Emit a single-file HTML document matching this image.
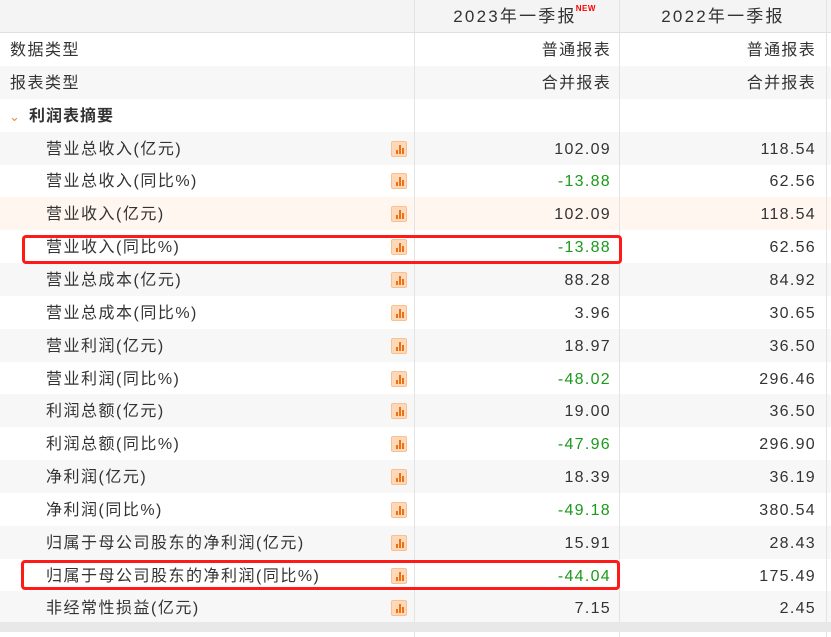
<!DOCTYPE html>
<html><head><meta charset="utf-8"><style>
*{margin:0;padding:0;box-sizing:border-box}
body{width:831px;height:637px;overflow:hidden;background:#fff;font-family:"Liberation Sans","Noto Sans CJK SC",sans-serif;font-size:16px;color:#333;position:relative;letter-spacing:0.6px}
.row{position:absolute;left:0;width:831px;height:33px;line-height:36px}
.c{position:absolute;top:0;height:100%}
.c1{left:0;width:414px;letter-spacing:1.5px}
.c2{left:414px;width:205px;text-align:right;padding-right:8px;border-left:1px solid #e3e3e3;letter-spacing:1.3px}
.c3{left:619px;width:208px;text-align:right;padding-right:10px;border-left:1px solid #e3e3e3;border-right:1px solid #e3e3e3;letter-spacing:1.3px}
.g{background:#f7f7f7}
.p{background:#fff6f0}
.grn{color:#1a9a1a}
.ic{position:absolute;left:391px;top:9px;width:16px;height:16px;background:#fdd9bb;border:1px solid #fbc08e;border-radius:2px}
.ic i{position:absolute;bottom:2px;width:2px;background:#f07010}
.red{position:absolute;border:3px solid #ff1a1a;border-radius:4px}
</style></head><body>
<div class="row" style="top:0;height:33px;line-height:34px;background:#f4f4f4;border-bottom:1px solid #e0e0e0">
 <div class="c c1"></div>
 <div class="c c2" style="text-align:center;padding:0 4px 0 0;color:#333;letter-spacing:2.2px;font-size:17px">2023年一季报<span style="color:#f00;font-size:8px;font-weight:bold;position:absolute;top:-8px;margin-left:-1px;letter-spacing:0.5px">NEW</span></div>
 <div class="c c3" style="text-align:center;padding:0;letter-spacing:2.2px;font-size:17px">2022年一季报</div>
</div>
<div id="rows"></div>
<script>
var R=[["数据类型","普通报表","普通报表",0,"",10],["报表类型","合并报表","合并报表",1,"",10],["利润表摘要","","",0,"h",30],
["营业总收入(亿元)","102.09","118.54",1],["营业总收入(同比%)","-13.88","62.56",0],["营业收入(亿元)","102.09","118.54",2],["营业收入(同比%)","-13.88","62.56",0],
["营业总成本(亿元)","88.28","84.92",1],["营业总成本(同比%)","3.96","30.65",0],["营业利润(亿元)","18.97","36.50",1],["营业利润(同比%)","-48.02","296.46",0],
["利润总额(亿元)","19.00","36.50",1],["利润总额(同比%)","-47.96","296.90",0],["净利润(亿元)","18.39","36.19",1],["净利润(同比%)","-49.18","380.54",0],
["归属于母公司股东的净利润(亿元)","15.91","28.43",1],["归属于母公司股东的净利润(同比%)","-44.04","175.49",0],["非经常性损益(亿元)","7.15","2.45",1]];
var h="";
R.forEach(function(r,i){var t=33+i*32.85;var cls=r[3]==1?"g":r[3]==2?"p":"";
var lab;
if(r[4]=="h")lab='<span style="position:absolute;left:9px;color:#f08a40;font-size:13px">&#8964;</span><b style="position:absolute;left:29px;top:0;letter-spacing:1px">'+r[0]+'</b>';
else if(r[5])lab='<span style="position:absolute;left:10px">'+r[0]+'</span>';
else lab='<span style="position:absolute;left:46px">'+r[0]+'</span><span class="ic"><i style="left:4px;height:4px"></i><i style="left:7px;height:9px"></i><i style="left:10px;height:6px"></i></span>';
var gc=r[1].charAt(0)=="-"?"grn":"";
h+='<div class="row '+cls+'" style="top:'+t+'px"><div class="c c1">'+lab+'</div><div class="c c2 '+gc+'">'+r[1]+'</div><div class="c c3">'+r[2]+'</div></div>';});
h+='<div class="row" style="top:622px;height:10px;background:#e8e8e8"></div><div class="row" style="top:632px;height:5px;background:#fff"><div class="c c2"></div><div class="c c3"></div></div>';
h+='<div class="red" style="left:22px;top:235px;width:600px;height:29px"></div><div class="red" style="left:21px;top:560px;width:599px;height:30px"></div>';
document.getElementById("rows").outerHTML=h;
</script>
</body></html>
